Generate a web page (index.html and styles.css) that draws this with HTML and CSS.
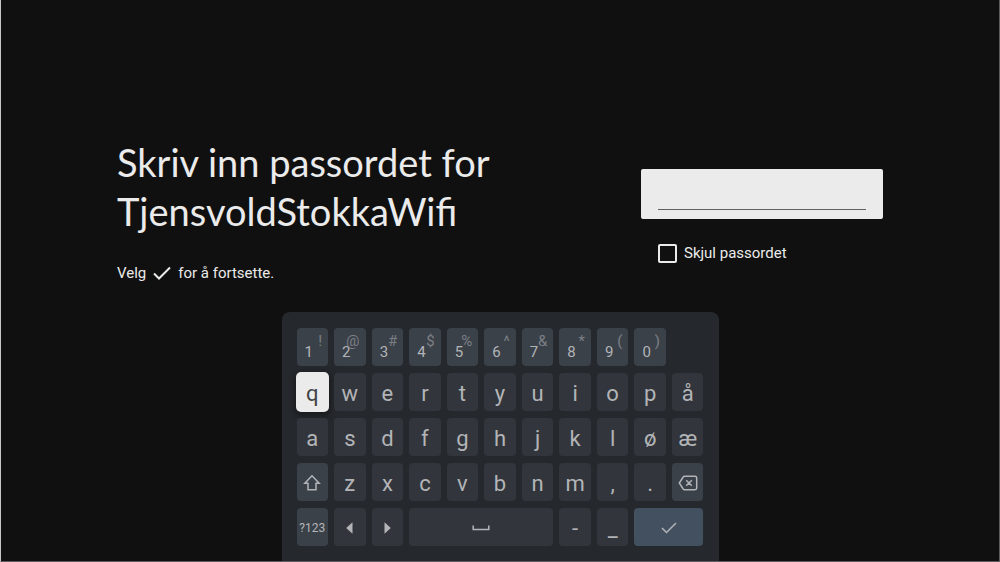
FILE: index.html
```
<!DOCTYPE html>
<html lang="no">
<head>
  <meta charset="UTF-8" />
  <meta name="viewport" content="width=device-width, initial-scale=1.0"/>
  <title>Wifi</title>
  <link rel="stylesheet" href="styles.css">
</head>
<body>

  <main class="setup">
    <div class="setup-text">
      <h1>Skriv inn passordet for TjensvoldStokkaWifi</h1>
      <p class="hint">
        Velg
        <svg class="hint-icon" viewBox="0 0 20 16"><path d="M2 8.5l5 5L18 2.500" /></svg>
        for å fortsette.
      </p>
    </div>
    <form class="setup-form">
      <div class="password-box">
        <input type="text" class="password-input" aria-label="Passord">
      </div>
      <label class="hide-password">
        <input type="checkbox">
        Skjul passordet
      </label>
    </form>
  </main>

  <div class="keyboard">
    <button class="key alt num">1<span class="symbol">!</span></button>
    <button class="key alt num">2<span class="symbol">@</span></button>
    <button class="key alt num">3<span class="symbol">#</span></button>
    <button class="key alt num">4<span class="symbol">$</span></button>
    <button class="key alt num">5<span class="symbol">%</span></button>
    <button class="key alt num">6<span class="symbol">^</span></button>
    <button class="key alt num">7<span class="symbol">&amp;</span></button>
    <button class="key alt num">8<span class="symbol">*</span></button>
    <button class="key alt num">9<span class="symbol">(</span></button>
    <button class="key alt num">0<span class="symbol">)</span></button>

    <button class="key first selected">q</button>
    <button class="key">w</button>
    <button class="key">e</button>
    <button class="key">r</button>
    <button class="key">t</button>
    <button class="key">y</button>
    <button class="key">u</button>
    <button class="key">i</button>
    <button class="key">o</button>
    <button class="key">p</button>
    <button class="key">å</button>

    <button class="key">a</button>
    <button class="key">s</button>
    <button class="key">d</button>
    <button class="key">f</button>
    <button class="key">g</button>
    <button class="key">h</button>
    <button class="key">j</button>
    <button class="key">k</button>
    <button class="key">l</button>
    <button class="key">ø</button>
    <button class="key">æ</button>

    <button class="key alt" aria-label="Shift">
      <svg width="18" height="18" viewBox="0 0 18 18"><path d="M9 1.800L1.800 9.300H5V15.800H13V9.300H16.200Z" /></svg>
    </button>
    <button class="key">z</button>
    <button class="key">x</button>
    <button class="key">c</button>
    <button class="key">v</button>
    <button class="key">b</button>
    <button class="key">n</button>
    <button class="key">m</button>
    <button class="key">,</button>
    <button class="key">.</button>
    <button class="key alt" aria-label="Slett">
      <svg width="20" height="16" viewBox="0 0 20 16"><path d="M6.500 1.300H17Q18.700 1.300 18.700 3V13Q18.700 14.700 17 14.700H6.500Q5.700 14.700 5.200 14L1.300 8L5.200 2Q5.700 1.300 6.500 1.300ZM8.200 5.200L13.800 10.800M13.800 5.200L8.200 10.800" /></svg>
    </button>

    <button class="key alt mode">?123</button>
    <button class="key" aria-label="Venstre">
      <svg class="solid" width="10" height="12" viewBox="0 0 10 12"><path d="M7.500 0.200V11.800L1.200 6Z" /></svg>
    </button>
    <button class="key" aria-label="Høyre">
      <svg class="solid" width="10" height="12" viewBox="0 0 10 12"><path d="M2.500 0.200V11.800L8.800 6Z" /></svg>
    </button>
    <button class="key space" aria-label="Mellomrom">
      <svg width="18" height="6" viewBox="0 0 18 6"><path d="M1.200 0.500V4.500H16.800V0.500" /></svg>
    </button>
    <button class="key">-</button>
    <button class="key">_</button>
    <button class="key enter" aria-label="Fortsett">
      <svg width="16" height="12" viewBox="0 0 16 12"><path d="M1 6L5.500 10.500L15 1" /></svg>
    </button>
  </div>

</body>
</html>
```

FILE: styles.css
```
* {
box-sizing: border-box;
}

body {
display: flex;
flex-direction: column;
min-height: 100vh;
margin: 0;
background-color: #101010;
border: 1px solid #5c5a5c;
border-top: none;
border-left-color: #c8c8c8;
color: #ebebeb;
font-family: Roboto, sans-serif;
}

.setup {
flex: 1;
display: grid;
grid-template-columns: 1fr 242px;
gap: 100px;
padding: 138px 116px 24px;
}

.setup-text h1 {
margin: 0 0 29px;
font-family: Lato, sans-serif;
font-size: 38px;
font-weight: 400;
line-height: 49px;
}

.hint {
display: flex;
align-items: center;
gap: 6px;
margin: 0;
font-size: 15px;
line-height: 16px;
}

.hint-icon {
width: 20px;
height: 16px;
fill: none;
stroke: #ebebeb;
stroke-width: 2;
}

.setup-form {
padding-top: 31px;
}

.password-box {
height: 50px;
padding: 8px 17px;
background-color: #ebebeb;
border-radius: 2px;
}

.password-input {
display: block;
width: 100%;
height: 33px;
padding: 0;
background: none;
border: none;
border-bottom: 1px solid #606060;
outline: none;
color: #202020;
font: 15px Roboto, sans-serif;
}

.hide-password {
display: flex;
align-items: center;
gap: 7px;
margin: 24px 17px 0;
font-size: 15px;
line-height: 20px;
}

.hide-password input {
appearance: none;
width: 19px;
height: 19px;
margin: 0;
border: 2px solid #ebebeb;
border-radius: 2px;
}

.hide-password input:checked {
background-color: #ebebeb;
}

.keyboard {
align-self: center;
display: grid;
grid-template-columns: repeat(11, 1fr);
grid-auto-rows: 38px;
gap: 7px 6px;
width: 100%;
max-width: 437px;
padding: 16px 15px 15px;
background-color: #25282c;
border-radius: 8px 8px 0 0;
}

.key {
position: relative;
display: flex;
align-items: center;
justify-content: center;
padding: 2px 0 0;
background-color: #32363c;
border: none;
border-radius: 4px;
color: #b2b4b7;
font: 22px Roboto, sans-serif;
}

.key svg {
fill: none;
stroke: #b2b4b7;
stroke-width: 1.5;
}

.key svg.solid {
fill: #b2b4b7;
stroke: none;
}

.key.alt {
background-color: #3b4149;
}

.key.num {
padding: 10px 7px 0 0;
font-size: 15px;
}

.symbol {
position: absolute;
top: 4px;
right: 6px;
color: #7b7f85;
}

.key.first {
grid-column-start: 1;
}

.key.selected {
background-color: #ebebeb;
box-shadow: 0 0 0 1px #ebebeb, 0 2px 6px 2px rgba(0, 0, 0, 0.4);
color: #404347;
}

.key.mode {
font-size: 12px;
}

.key.space {
grid-column: span 4;
}

.key.enter {
grid-column: span 2;
background-color: #435060;
}
```
